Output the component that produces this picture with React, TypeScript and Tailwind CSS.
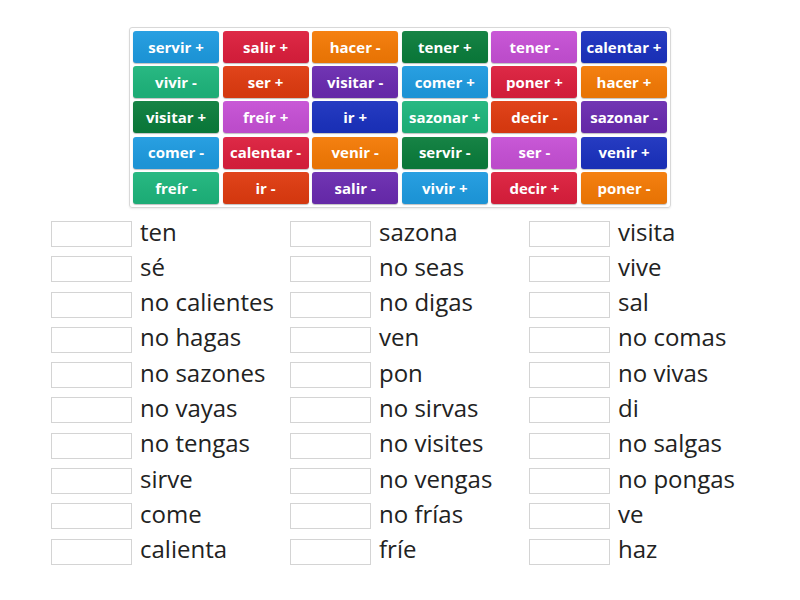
const tiles: [string, string][] = [
  ["servir +", "bg-[#1e9be0]"],
  ["salir +", "bg-[#dc1f3d]"],
  ["hacer -", "bg-[#f47a05]"],
  ["tener +", "bg-[#0b7d3c]"],
  ["tener -", "bg-[#c650d5]"],
  ["calentar +", "bg-[#1b32bf]"],
  ["vivir -", "bg-[#1eb57c]"],
  ["ser +", "bg-[#df3b10]"],
  ["visitar -", "bg-[#6a2bb0]"],
  ["comer +", "bg-[#1e9be0]"],
  ["poner +", "bg-[#dc1f3d]"],
  ["hacer +", "bg-[#f47a05]"],
  ["visitar +", "bg-[#0b7d3c]"],
  ["freír +", "bg-[#c650d5]"],
  ["ir +", "bg-[#1b32bf]"],
  ["sazonar +", "bg-[#1eb57c]"],
  ["decir -", "bg-[#df3b10]"],
  ["sazonar -", "bg-[#6a2bb0]"],
  ["comer -", "bg-[#1e9be0]"],
  ["calentar -", "bg-[#dc1f3d]"],
  ["venir -", "bg-[#f47a05]"],
  ["servir -", "bg-[#0b7d3c]"],
  ["ser -", "bg-[#c650d5]"],
  ["venir +", "bg-[#1b32bf]"],
  ["freír -", "bg-[#1eb57c]"],
  ["ir -", "bg-[#df3b10]"],
  ["salir -", "bg-[#6a2bb0]"],
  ["vivir +", "bg-[#1e9be0]"],
  ["decir +", "bg-[#dc1f3d]"],
  ["poner -", "bg-[#f47a05]"],
];

const columns: string[][] = [
  ["ten", "sé", "no calientes", "no hagas", "no sazones", "no vayas", "no tengas", "sirve", "come", "calienta"],
  ["sazona", "no seas", "no digas", "ven", "pon", "no sirvas", "no visites", "no vengas", "no frías", "fríe"],
  ["visita", "vive", "sal", "no comas", "no vivas", "di", "no salgas", "no pongas", "ve", "haz"],
];

function Tile({ label, color }: { label: string; color: string }) {
  return (
    <div
      className={`${color} h-[32px] rounded-[3px] flex items-center justify-center text-white font-bold text-[15px] shadow-[0_1px_1px_rgba(0,0,0,0.25)] bg-gradient-to-b from-white/5 to-black/5`}
    >
      {label}
    </div>
  );
}

function AnswerRow({ text }: { text: string }) {
  return (
    <div className="flex items-center h-[26px]">
      <div className="w-[81px] h-[26px] border border-[#d4d4d4] bg-white shrink-0" />
      <span className="ml-[8px] text-[24px] leading-none text-[#222] -mt-[5px] whitespace-nowrap">{text}</span>
    </div>
  );
}

export default function App() {
  return (
    <div className="w-[800px] h-[600px] bg-white font-['Open_Sans',sans-serif] relative overflow-hidden">
      <div className="pt-[27px] pl-[129px]">
        <div className="w-[542px] h-[181px] border border-[#d8d8d8] rounded-[3px] pl-[3px] pt-[3px] shadow-[0_1px_2px_rgba(0,0,0,0.08)]">
          <div className="grid grid-cols-[repeat(6,86px)] gap-x-[3.6px] gap-y-[3.2px]">
            {tiles.map(([label, color], i) => (
              <Tile key={i} label={label} color={color} />
            ))}
          </div>
        </div>
      </div>
      <div className="pl-[51px] pt-[13px] flex">
        {columns.map((col, ci) => (
          <div key={ci} className="w-[239px] flex flex-col gap-y-[9.3px]">
            {col.map((t, i) => (
              <AnswerRow key={i} text={t} />
            ))}
          </div>
        ))}
      </div>
    </div>
  );
}
